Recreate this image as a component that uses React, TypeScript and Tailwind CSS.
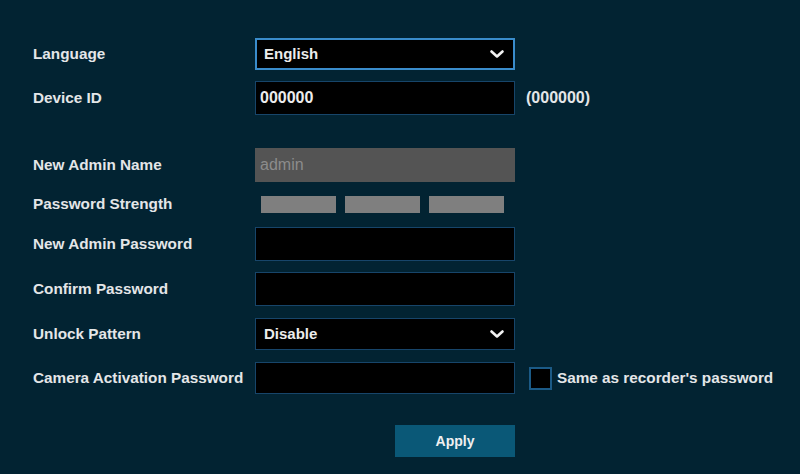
import React from 'react';

const Chevron = () => (
  <svg width="14" height="10" viewBox="0 0 14 10" className="shrink-0">
    <path d="M1.5 2.5 L7 7.5 L12.5 2.5" fill="none" stroke="#f2f2f2" strokeWidth="2.6" strokeLinecap="round" strokeLinejoin="round" />
  </svg>
);

const Label = ({ children }: { children: React.ReactNode }) => (
  <div className="w-[222px] shrink-0 text-[15.3px] font-bold text-[#e4e6e8]">{children}</div>
);

const App = () => {
  return (
    <div className="w-[800px] h-[474px] bg-[#022332] pl-[33px] pt-[38px] font-['Liberation_Sans',Arial,sans-serif] overflow-hidden">
      {/* Language */}
      <div className="flex items-center h-[32px]">
        <Label>Language</Label>
        <div className="w-[260px] h-[32px] bg-black border-2 border-[#3a8ccb] flex items-center justify-between pl-[7px] pr-[9px]">
          <span className="text-[15px] font-bold text-[#ececec]">English</span>
          <Chevron />
        </div>
      </div>

      {/* Device ID */}
      <div className="flex items-center h-[34px] mt-[11px]">
        <Label>Device ID</Label>
        <div className="w-[260px] h-[34px] bg-black border border-[#17456a] flex items-center pl-[4px]">
          <span className="text-[16px] text-[#ececec] font-bold">000000</span>
        </div>
        <span className="ml-[11px] text-[16px] font-bold text-[#e4e6e8]">(000000)</span>
      </div>

      {/* New Admin Name */}
      <div className="flex items-center h-[34px] mt-[33px]">
        <Label>New Admin Name</Label>
        <div className="w-[260px] h-[34px] bg-[#545454] flex items-center pl-[5px]">
          <span className="text-[16px] text-[#8c8c8c]">admin</span>
        </div>
      </div>

      {/* Password Strength */}
      <div className="flex items-center h-[17px] mt-[14px]">
        <Label>Password Strength</Label>
        <div className="flex gap-[9px] pl-[6px]">
          <div className="w-[75px] h-[17px] bg-[#7f7f7f]" />
          <div className="w-[75px] h-[17px] bg-[#7f7f7f]" />
          <div className="w-[75px] h-[17px] bg-[#7f7f7f]" />
        </div>
      </div>

      {/* New Admin Password */}
      <div className="flex items-center h-[34px] mt-[14px]">
        <Label>New Admin Password</Label>
        <div className="w-[260px] h-[34px] bg-black border border-[#17456a]" />
      </div>

      {/* Confirm Password */}
      <div className="flex items-center h-[34px] mt-[11px]">
        <Label>Confirm Password</Label>
        <div className="w-[260px] h-[34px] bg-black border border-[#17456a]" />
      </div>

      {/* Unlock Pattern */}
      <div className="flex items-center h-[32px] mt-[12px]">
        <Label>Unlock Pattern</Label>
        <div className="w-[260px] h-[32px] bg-black border border-[#17456a] flex items-center justify-between pl-[8px] pr-[10px]">
          <span className="text-[15px] font-bold text-[#ececec]">Disable</span>
          <Chevron />
        </div>
      </div>

      {/* Camera Activation Password */}
      <div className="flex items-center h-[32px] mt-[12px]">
        <Label>Camera Activation Password</Label>
        <div className="w-[260px] h-[32px] bg-black border border-[#17456a]" />
        <div className="ml-[14px] w-[23px] h-[23px] bg-black border-2 border-[#1b5a86]" />
        <span className="ml-[5px] text-[15.3px] font-bold text-[#e4e6e8]">Same as recorder's password</span>
      </div>

      {/* Apply */}
      <div className="flex mt-[31px] pl-[362px]">
        <button className="w-[120px] h-[32px] bg-[#0a5877] text-[14px] font-bold text-[#f0f0f0]">Apply</button>
      </div>
    </div>
  );
};

export default App;
